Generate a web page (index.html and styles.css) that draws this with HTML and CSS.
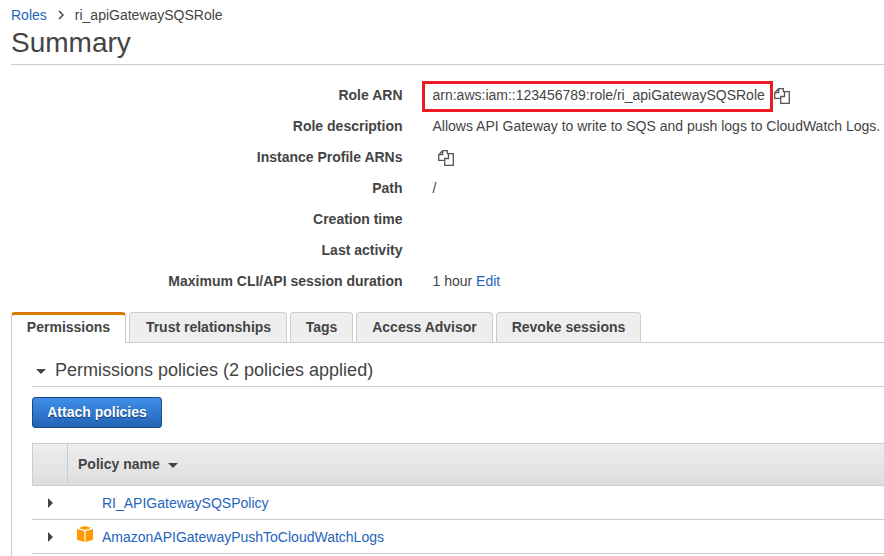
FILE: index.html
```html
<!DOCTYPE html>
<html lang="en">
<head>
<meta charset="utf-8">
<title>Role summary</title>
<link rel="stylesheet" href="styles.css">
</head>
<body>
<header class="head">
  <nav class="crumbs"><a>Roles</a><svg class="chev" width="6" height="10" viewBox="0 0 6 10"><path d="M1 1l4 4-4 4" fill="none" stroke="#444" stroke-width="1.5"/></svg><span>ri_apiGatewaySQSRole</span></nav>
  <h1>Summary</h1>
</header>
<dl class="details">
  <dt>Role ARN</dt><dd><span class="arn">arn:aws:iam::123456789:role/ri_apiGatewaySQSRole</span><svg class="copy" width="16" height="16" viewBox="0 0 16 16"><g fill="none" stroke="#555" stroke-width="1.3"><path d="M6 10.300H.7V4.700l4-4h4.600v3.500M4.700.7v4h-4"/><path d="M10.500 3.700h4.800v11.600H6.700V8.500h3.800z"/></g></svg></dd>
  <dt>Role description</dt><dd>Allows API Gateway to write to SQS and push logs to CloudWatch Logs.</dd>
  <dt>Instance Profile ARNs</dt><dd><svg class="copy solo" width="16" height="16" viewBox="0 0 16 16"><g fill="none" stroke="#555" stroke-width="1.3"><path d="M6 10.300H.7V4.700l4-4h4.600v3.500M4.700.7v4h-4"/><path d="M10.500 3.700h4.800v11.600H6.700V8.500h3.800z"/></g></svg></dd>
  <dt>Path</dt><dd>/</dd>
  <dt>Creation time</dt><dd></dd>
  <dt>Last activity</dt><dd></dd>
  <dt>Maximum CLI/API session duration</dt><dd>1 hour&nbsp;<a>Edit</a></dd>
</dl>
<div class="tabs">
  <div class="tab active">Permissions</div><div class="tab trust">Trust relationships</div><div class="tab tags">Tags</div><div class="tab advisor">Access Advisor</div><div class="tab revoke">Revoke sessions</div>
</div>
<main class="panel">
  <h2><i class="down"></i>Permissions policies (2 policies applied)</h2>
  <button class="attach">Attach policies</button>
  <div class="table">
    <div class="row th"><span class="expand"></span><span class="name">Policy name<i class="down"></i></span></div>
    <div class="row"><span class="expand"><i class="right"></i></span><span class="icon"></span><a>RI_APIGatewaySQSPolicy</a></div>
    <div class="row"><span class="expand"><i class="right"></i></span><span class="icon"><svg width="16" height="16" viewBox="0 0 16 16"><path d="M0 3l7.400 2.200V16L0 13.700zM16 3L8.600 5.200V16l7.400-2.300zM8 0l6.500 1.900L8 3.900 1.500 1.900z" fill="#f90"/></svg></span><a>AmazonAPIGatewayPushToCloudWatchLogs</a></div>
  </div>
</main>
</body>
</html>
```
FILE: styles.css
```css
* { box-sizing: border-box; }
body { margin: 0; width: 884px; height: 556px; overflow: hidden; background: #fff; color: #444; font: 14px/20px "Liberation Sans", Arial, sans-serif; }
a { color: #2564bd; }
.head { margin-left: 11px; height: 65px; border-bottom: 1px solid #ccc; padding-top: 5px; }
.crumbs { display: flex; align-items: center; height: 20px; }
.chev { margin: 0 11px; }
h1 { margin: 0; font-weight: 400; font-size: 28px; line-height: 36px; }
.details { display: grid; grid-template-columns: 402.5px 1fr; grid-auto-rows: 31px; column-gap: 30px; margin: 15px 0 0; height: 232px; line-height: 31px; white-space: nowrap; }
dt { font-weight: 700; text-align: right; }
dd { margin: 0; display: flex; align-items: center; }
.arn { border: 3px solid #ed1c24; margin: 2px 0 0 -10.5px; width: 351px; height: 31px; line-height: 23px; padding-left: 7.5px; flex: none; }
.copy { margin: 1px 0 0 1px; }
.solo { margin-left: 5.5px; }
.tabs { display: flex; gap: 3px; margin-left: 11px; height: 31px; border-bottom: 1px solid #ccc; }
.tab { height: 30px; border: 1px solid #ccc; border-bottom: 0; border-radius: 4px 4px 0 0; background: #eee; font-weight: 700; line-height: 29px; text-align: center; }
.active { width: 115px; height: 31px; border-top: 3px solid #d97700; background: #fff; line-height: 25px; }
.trust { width: 158px; padding-left: 1px; }
.tags { width: 63px; }
.advisor { width: 137px; }
.revoke { width: 145px; }
.panel { margin-left: 11px; height: 213px; border-left: 1px solid #ccc; padding: 13px 0 0 20px; }
h2 { display: flex; align-items: center; margin: 0; height: 31px; padding-bottom: 3px; border-bottom: 1px solid #ccc; font-size: 18px; font-weight: 400; }
i { flex: none; }
.down { border: 5px solid transparent; border-top-color: #444; border-bottom: 0; }
h2 .down { margin: 3px 9px 0 4px; }
.attach { display: block; width: 130px; height: 31px; margin: 10px 0 15px; padding: 0 0 2px; border: 1px solid #1c4a84; border-radius: 3px; background: linear-gradient(#3f8fea, #2364b5); color: #fff; font: 700 14px "Liberation Sans", Arial, sans-serif; text-shadow: 0 1px 1px #123a70; }
.row { display: flex; align-items: center; height: 34px; border-bottom: 1px solid #ccc; }
.th { height: 43px; border: 1px solid #ccc; border-right: 0; background: linear-gradient(#eee, #ddd); font-weight: 700; }
.expand { width: 35px; height: 100%; display: flex; align-items: center; padding-left: 16px; }
.th .expand { border-right: 1px solid #ccc; }
.name { display: flex; align-items: center; padding: 0 0 1px 10px; }
.name .down { margin: 2px 0 0 8px; }
.right { border: 5px solid transparent; border-left-color: #444; border-right: 0; }
.row .right { margin-top: 1px; }
.icon { width: 35px; height: 21px; padding-left: 10px; }
.icon svg { display: block; }
```
